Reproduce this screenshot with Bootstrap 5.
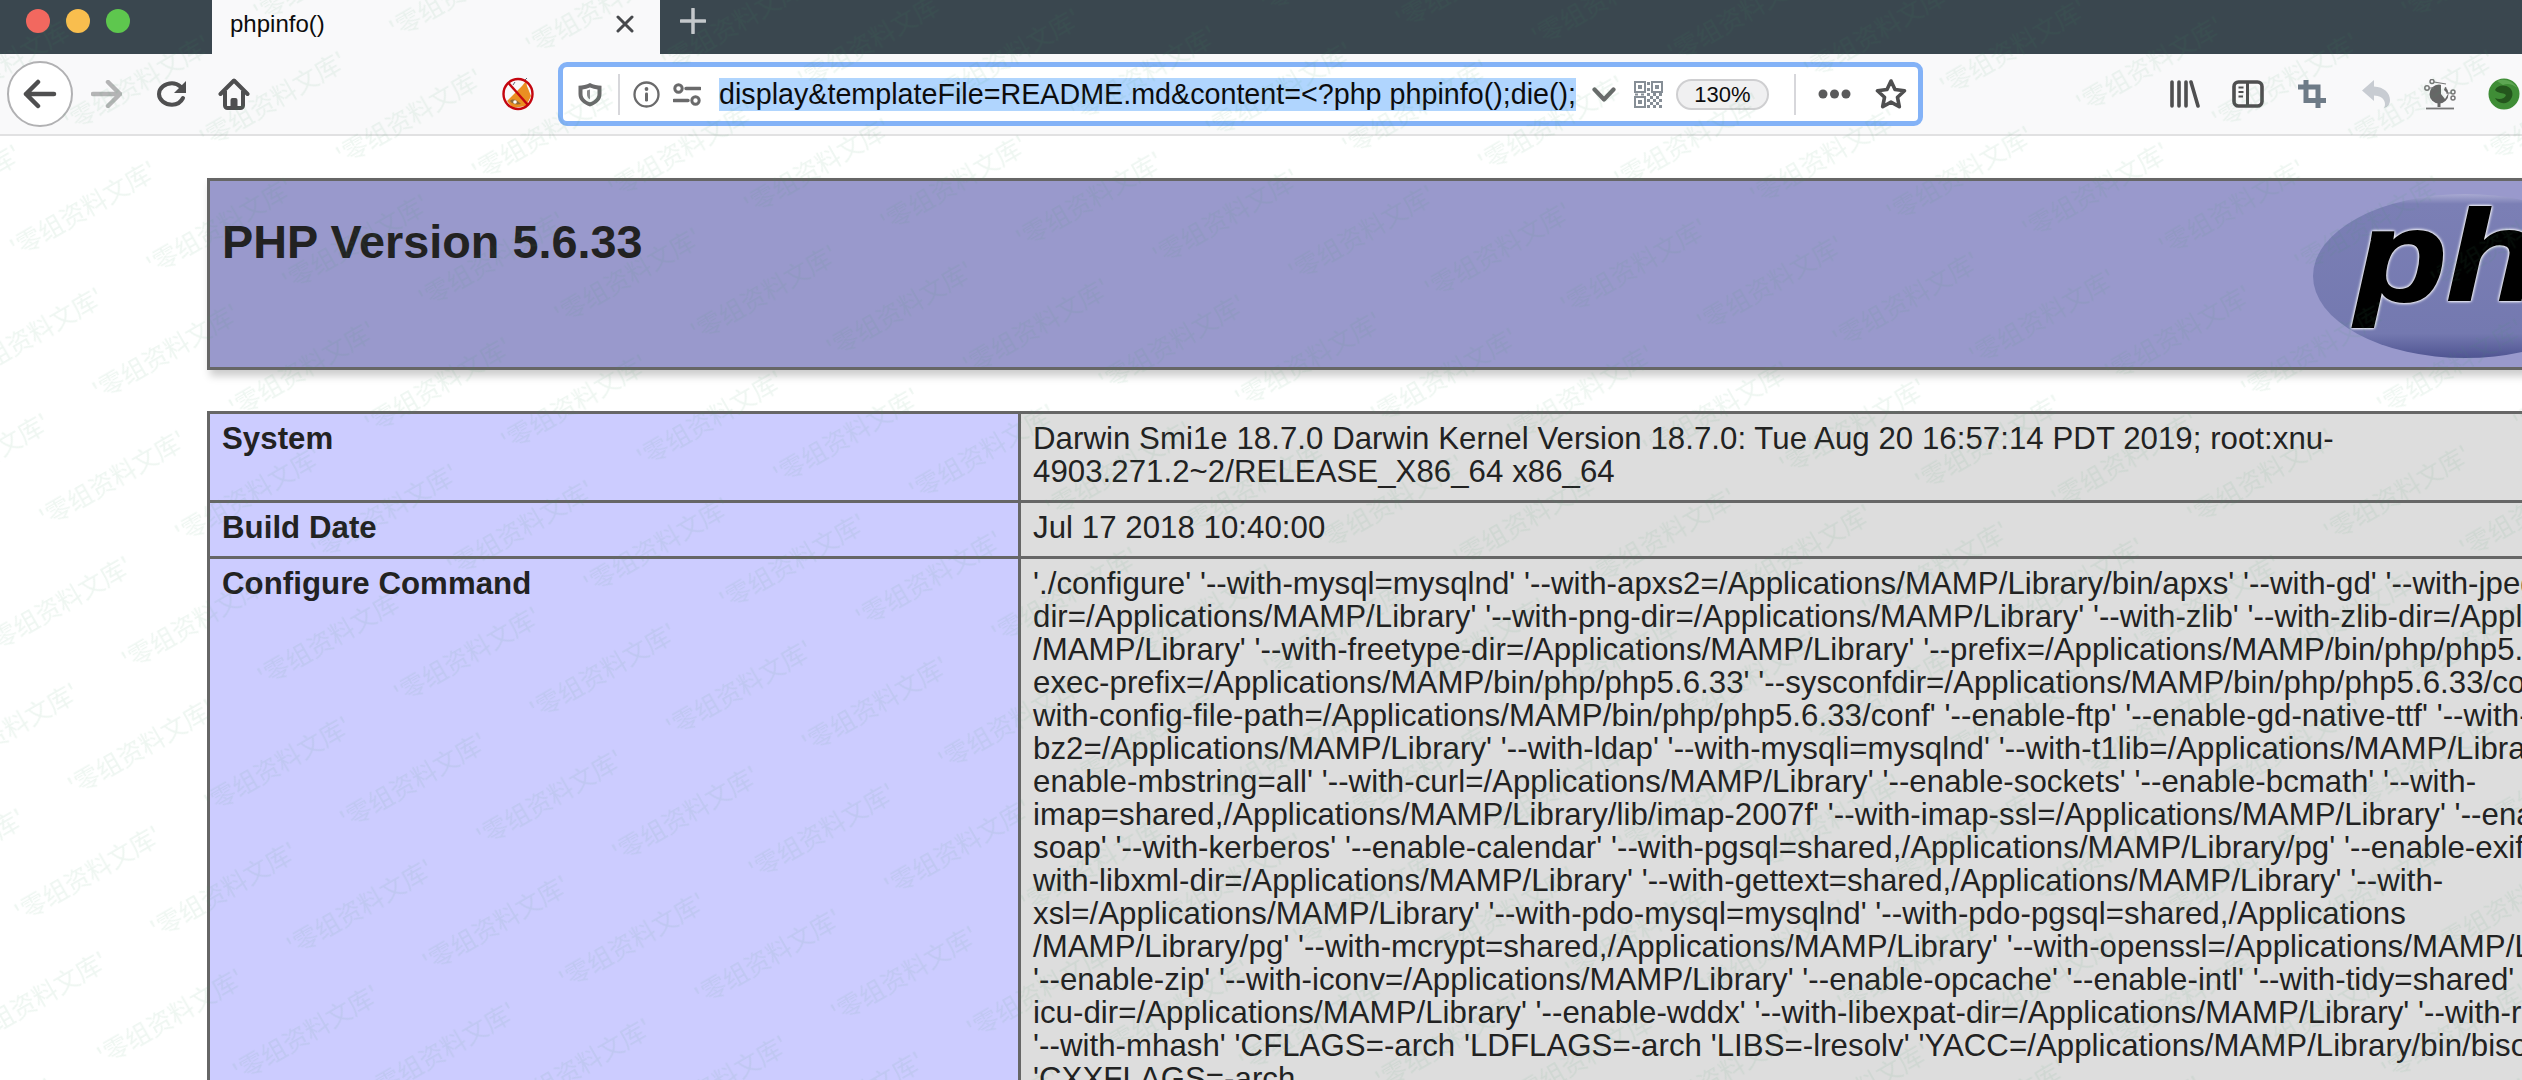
<!DOCTYPE html>
<html lang="en">
<head>
<meta charset="utf-8">
<title>phpinfo()</title>
<link href="https://cdn.jsdelivr.net/npm/bootstrap@5.3.0/dist/css/bootstrap.min.css" rel="stylesheet">
<style>
html,body{margin:0;background:#fff;overflow:hidden}
body{font-family:"Liberation Sans",Arial,"Noto Sans CJK SC",sans-serif;color:#222}
.page-frame{width:2522px;height:1080px}
svg{display:block;flex-shrink:0}
.tabbar{height:54px;background:#3a474f}
.light{width:24px;height:24px;border-radius:50%;margin-right:16px}
.l-red{background:#f2685f;margin-left:26px}
.l-yel{background:#f9be4e}
.l-grn{background:#5ec74e}
.tab-box{width:448px;height:54px;background:#f9f9fa;margin-left:66px;padding:0 26px 6px 18px;font-size:24px;color:#0c0c0d}
.ml-new{margin-left:20px}
.toolbar{height:82px;background:#f9f9fa;border-bottom:2px solid #e1e1e2}
.back-btn{width:66px;height:66px;border-radius:50%;background:#fff;border:2px solid #b1b1b3;margin-left:7px}
.m18{margin-left:18px}.m34{margin-left:34px}.m31{margin-left:31px}.m252{margin-left:252px}.m24{margin-left:24px}
.m247{margin-left:247px}.m32{margin-left:32px}.m36{margin-left:36px}
.addr{width:1365px;height:64px;background:#fff;border:5px solid #83b2f7;border-radius:9px}
.a14{margin-left:14px}.a15{margin-left:15px}.a13{margin-left:13px}.a18{margin-left:18px}.a16{margin-left:16px}.a25{margin-left:25px}.a22{margin-left:22px}.a24{margin-left:24px}
.vsep{width:2px;height:41px;background:#d7d7db;flex-shrink:0}
.url-sel{width:857px;height:33px;line-height:33px;font-size:28.7px;white-space:nowrap;background:#b0d5fe;color:#0c0c0d;flex-shrink:0;overflow:hidden}
.zoom-pill{width:93px;height:31px;border:2px solid #cfcfd1;background:#f0f0f1;font-size:22px;color:#0c0c0d;flex-shrink:0}
.content{padding:42px 0 0 207px;width:2700px}
.php-head{width:2428px;height:192px;background:#99c;border:3px solid #666;box-shadow:3px 6px 8px #ccc;padding:0 12px;margin-bottom:41px}
.php-head h1{font-size:46.8px;font-weight:700;line-height:54px;margin:0;padding-top:34px;color:#222}
.info-tbl{width:2428px;table-layout:fixed;border-collapse:collapse;font-size:31.2px;line-height:33px;color:#222;letter-spacing:.05px}
.info-tbl td{border:3px solid #666;padding:8px 12px 12px;vertical-align:top}
.td-key{width:811px;background:#ccf;font-weight:700}
.td-val{background:#ddd;white-space:nowrap;overflow:hidden}
.wm{position:absolute;left:0;top:0;pointer-events:none;z-index:5}
.wm text{font-family:"Noto Sans CJK SC",sans-serif;font-size:25px;fill:#3f9a62;fill-opacity:.085}
.logo-art{position:absolute;left:2280px;top:185px;z-index:2}
.logo-art text{font-family:"Liberation Sans",sans-serif;font-style:italic;font-weight:700;font-size:128px;stroke:#000;stroke-width:2px;fill:#000;filter:drop-shadow(0 0 1.5px #fff) drop-shadow(0 0 1px #fff)}
</style>
</head>
<body>
<div class="page-frame position-relative overflow-hidden">

<div class="tabbar d-flex align-items-start">
  <div class="d-flex align-items-center" style="height:42px">
    <span class="light l-red"></span><span class="light l-yel"></span><span class="light l-grn"></span>
  </div>
  <div class="tab-box d-flex align-items-center justify-content-between">
    <span>phpinfo()</span>
    <svg width="18" height="18" viewBox="0 0 18 18"><path d="M2 2L16 16M16 2L2 16" stroke="#47494c" stroke-width="3" stroke-linecap="round"/></svg>
  </div>
  <div class="d-flex align-items-center ml-new" style="height:42px">
    <svg width="26" height="26" viewBox="0 0 26 26"><path d="M13 1V25M1 13H25" stroke="#c4c8cb" stroke-width="3.5" stroke-linecap="round"/></svg>
  </div>
</div>

<div class="toolbar d-flex align-items-center">
  <div class="back-btn d-flex align-items-center justify-content-center flex-shrink-0">
    <svg width="34" height="30" viewBox="0 0 34 30"><path d="M3 15H31M15 3L3 15L15 27" fill="none" stroke="#4f4f50" stroke-width="4.5" stroke-linecap="round" stroke-linejoin="round"/></svg>
  </div>
  <svg class="m18" width="31" height="28" viewBox="0 0 31 28"><path d="M2 14H29M17 2L29 14L17 26" fill="none" stroke="#b4b4b5" stroke-width="4.5" stroke-linecap="round" stroke-linejoin="round"/></svg>
  <svg class="m34" width="31" height="26" viewBox="0 0 31 26"><path d="M25 6C22 3.500 19 2.300 16 2.300C9 2.300 3 7 3 13C3 19 9 23.700 16 23.700C21 23.700 25 21 27 17" fill="none" stroke="#4f4f50" stroke-width="4" stroke-linecap="round"/><path d="M30 0V12H18Z" fill="#4f4f50"/></svg>
  <svg class="m31" width="32" height="32" viewBox="0 0 32 32"><path d="M2.500 16L16 2.500L29.500 16" fill="none" stroke="#4f4f50" stroke-width="4" stroke-linecap="round" stroke-linejoin="round"/><path d="M7 13V27.500a2.500 2.500 0 0 0 2.500 2.500H22.500a2.500 2.500 0 0 0 2.500-2.500V13" fill="none" stroke="#4f4f50" stroke-width="4"/><path d="M12.500 30V22a2 2 0 0 1 2-2h3a2 2 0 0 1 2 2v8z" fill="#4f4f50"/></svg>
  <svg class="m252" width="32" height="34" viewBox="0 0 32 34"><path d="M5 24L20 9L24 4L25 9L29 19L24 29L11 31Z" fill="#ea8f22"/><path d="M8 24C11 21 15 23 19 27C14 28 10 27 8 24Z" fill="#8d6a3a"/><circle cx="13" cy="25" r="1.800" fill="#fff"/><path d="M11 8L13 5M22 4L25 1" stroke="#667" stroke-width="1"/><ellipse cx="16" cy="17" rx="14.500" ry="15" fill="none" stroke="#c4060f" stroke-width="2.400"/><path d="M6.500 6L26 28" stroke="#c4060f" stroke-width="2.400"/></svg>
  <div class="addr d-flex align-items-center flex-shrink-0 m24">
    <svg class="a14" width="26" height="25" viewBox="0 0 26 25"><path d="M13 1C9.500 2.800 5.500 3.600 1.500 3.800V12C1.500 18 6 22 13 24.500C20 22 24.500 18 24.500 12V3.800C20.500 3.600 16.500 2.800 13 1Z" fill="#6a6a6b"/><path d="M13 5.500C10.500 6.600 8 7.200 5.500 7.400V12C5.500 16 8.500 18.800 13 20.300C17.500 18.800 20.500 16 20.500 12V7.400C18 7.200 15.500 6.600 13 5.500Z" fill="#fff"/><path d="M13 7.500V17.500C10.800 16.500 10 14.500 10 12V8.500Z" fill="#8a8a8c"/></svg>
    <span class="vsep a15"></span>
    <svg class="a13" width="27" height="27" viewBox="0 0 27 27"><circle cx="13.500" cy="13.500" r="12" fill="none" stroke="#6a6a6b" stroke-width="2.300"/><circle cx="13.500" cy="8" r="1.900" fill="#6a6a6b"/><rect x="12" y="11.500" width="3" height="9" rx="1.200" fill="#6a6a6b"/></svg>
    <svg class="a13" width="28" height="23" viewBox="0 0 28 23"><circle cx="5.500" cy="5.500" r="3.700" fill="none" stroke="#6a6a6b" stroke-width="3"/><path d="M13 5.500H27M1 17.500H15" stroke="#6a6a6b" stroke-width="3.500" stroke-linecap="round"/><circle cx="22.500" cy="17.500" r="3.700" fill="none" stroke="#6a6a6b" stroke-width="3"/></svg>
    <span class="url-sel a18">display&amp;templateFile=README.md&amp;content=&lt;?php phpinfo();die();</span>
    <svg class="a16" width="24" height="15" viewBox="0 0 24 15"><path d="M2.500 2.500L12 12.500L21.500 2.500" fill="none" stroke="#6a6a6b" stroke-width="4.200" stroke-linecap="round" stroke-linejoin="round"/></svg>
    <svg class="a18" width="29" height="27" viewBox="0 0 29 27"><g fill="none" stroke="#868e96" stroke-width="2"><rect x="1" y="1" width="10" height="10"/><rect x="18" y="1" width="10" height="10"/><rect x="1" y="16" width="10" height="10"/></g><g fill="#868e96"><rect x="4" y="4" width="4" height="4"/><rect x="21" y="4" width="4" height="4"/><rect x="4" y="19" width="4" height="4"/><rect x="13" y="1" width="3" height="3"/><rect x="13" y="7" width="3" height="3"/><rect x="1" y="12.500" width="3" height="2"/><rect x="7" y="12.500" width="3" height="2"/><rect x="13" y="12" width="3" height="3"/><rect x="19" y="12" width="3" height="3"/><rect x="25" y="12" width="3" height="3"/><rect x="13" y="18" width="3" height="3"/><rect x="16" y="15" width="3" height="3"/><rect x="22" y="15" width="3" height="3"/><rect x="19" y="18" width="3" height="3"/><rect x="25" y="18" width="3" height="3"/><rect x="16" y="21" width="3" height="3"/><rect x="22" y="21" width="3" height="3"/><rect x="13" y="24" width="3" height="3"/><rect x="19" y="24" width="3" height="3"/><rect x="25" y="24" width="3" height="3"/></g></svg>
    <span class="zoom-pill a13 rounded-pill d-flex align-items-center justify-content-center">130%</span>
    <span class="vsep a25"></span>
    <svg class="a22" width="33" height="10" viewBox="0 0 33 10"><g fill="#5a5a5b"><circle cx="5" cy="5" r="4.500"/><circle cx="16.500" cy="5" r="4.500"/><circle cx="28" cy="5" r="4.500"/></g></svg>
    <svg class="a24" width="32" height="32" viewBox="0 0 32 32"><path d="M16 3L20 11.500L29.500 12.800L22.500 19.300L24.300 28.700L16 24.100L7.700 28.700L9.500 19.300L2.500 12.800L12 11.500Z" fill="none" stroke="#4f4f50" stroke-width="3.600" stroke-linejoin="round"/></svg>
  </div>
  <svg class="m247" width="30" height="28" viewBox="0 0 30 28"><path d="M2 2V26M9 2V26M16 2V26M21 2L28 26" fill="none" stroke="#4f4f50" stroke-width="3.600" stroke-linecap="round"/></svg>
  <svg class="m32" width="32" height="28" viewBox="0 0 32 28"><rect x="2" y="2" width="28" height="24" rx="4.500" fill="none" stroke="#4f4f50" stroke-width="3.600"/><path d="M15.500 2V26" stroke="#4f4f50" stroke-width="3"/><path d="M6.500 7.500H11.500M6.500 12H11.500M6.500 16.500H11" stroke="#4f4f50" stroke-width="2"/></svg>
  <svg class="m34" width="28" height="28" viewBox="0 0 28 28"><path d="M8 0V20.500H28M0 7H20V28" fill="none" stroke="#6e7b87" stroke-width="5"/></svg>
  <svg class="m36" width="28" height="28" viewBox="0 0 28 28"><path d="M0 10.500L12 0V6.500C22 7 28 13 28 20C28 24 26 27 22 28C24.500 24 23 16 12 15.500V21Z" fill="#c8ccd2"/></svg>
  <svg class="m34" width="32" height="31" viewBox="0 0 32 31"><circle cx="15" cy="15" r="9.500" fill="#666"/><path d="M17 6L22 5L20 11L24 15L21 20L17 15Z" fill="#f9f9fa"/><path d="M10 3L22 5M4 9H10M22 14H28" stroke="#777" stroke-width="1.200"/><g fill="#f9f9fa" stroke="#777" stroke-width="1.500"><circle cx="8" cy="2.500" r="2"/><circle cx="3" cy="9" r="2.200"/><circle cx="29" cy="13" r="2"/><circle cx="29" cy="19" r="2"/></g><path d="M15 24V28" stroke="#666" stroke-width="3"/><path d="M2 29.500H30" stroke="#777" stroke-width="1.800"/></svg>
  <svg class="m32" width="32" height="32" viewBox="0 0 32 32"><circle cx="16" cy="16" r="15.500" fill="#3f8d36"/><path d="M9 3C15 0 25 2 29 10C25 6 19 5 15 7Z" fill="#5da653"/><path d="M7 12C9 7 17 6 22 10C26 14 25 21 20 24C15 27 9 24 7 20C11 22 17 21 18 17C15 14 10 16 7 12Z" fill="#24561d"/></svg>
</div>

<div class="content">
  <div class="php-head"><h1>PHP Version 5.6.33</h1></div>
  <table class="info-tbl">
    <tbody>
      <tr><td class="td-key">System</td><td class="td-val">Darwin Smi1e 18.7.0 Darwin Kernel Version 18.7.0: Tue Aug 20 16:57:14 PDT 2019; root:xnu-<br>4903.271.2~2/RELEASE_X86_64 x86_64</td></tr>
      <tr><td class="td-key">Build Date</td><td class="td-val">Jul 17 2018 10:40:00</td></tr>
      <tr><td class="td-key">Configure Command</td><td class="td-val">'./configure' '--with-mysql=mysqlnd' '--with-apxs2=/Applications/MAMP/Library/bin/apxs' '--with-gd' '--with-jpeg-<br>
dir=/Applications/MAMP/Library' '--with-png-dir=/Applications/MAMP/Library' '--with-zlib' '--with-zlib-dir=/Applications<br>
/MAMP/Library' '--with-freetype-dir=/Applications/MAMP/Library' '--prefix=/Applications/MAMP/bin/php/php5.6.33' '--<br>
exec-prefix=/Applications/MAMP/bin/php/php5.6.33' '--sysconfdir=/Applications/MAMP/bin/php/php5.6.33/conf' '--<br>
with-config-file-path=/Applications/MAMP/bin/php/php5.6.33/conf' '--enable-ftp' '--enable-gd-native-ttf' '--with-<br>
bz2=/Applications/MAMP/Library' '--with-ldap' '--with-mysqli=mysqlnd' '--with-t1lib=/Applications/MAMP/Library' '--<br>
enable-mbstring=all' '--with-curl=/Applications/MAMP/Library' '--enable-sockets' '--enable-bcmath' '--with-<br>
imap=shared,/Applications/MAMP/Library/lib/imap-2007f' '--with-imap-ssl=/Applications/MAMP/Library' '--enable-<br>
soap' '--with-kerberos' '--enable-calendar' '--with-pgsql=shared,/Applications/MAMP/Library/pg' '--enable-exif' '--<br>
with-libxml-dir=/Applications/MAMP/Library' '--with-gettext=shared,/Applications/MAMP/Library' '--with-<br>
xsl=/Applications/MAMP/Library' '--with-pdo-mysql=mysqlnd' '--with-pdo-pgsql=shared,/Applications<br>
/MAMP/Library/pg' '--with-mcrypt=shared,/Applications/MAMP/Library' '--with-openssl=/Applications/MAMP/Library'<br>
'--enable-zip' '--with-iconv=/Applications/MAMP/Library' '--enable-opcache' '--enable-intl' '--with-tidy=shared' '--with-<br>
icu-dir=/Applications/MAMP/Library' '--enable-wddx' '--with-libexpat-dir=/Applications/MAMP/Library' '--with-readline<br>
'--with-mhash' 'CFLAGS=-arch 'LDFLAGS=-arch 'LIBS=-lresolv' 'YACC=/Applications/MAMP/Library/bin/bison'<br>
'CXXFLAGS=-arch</td></tr>
    </tbody>
  </table>
</div>

<svg class="logo-art" width="242" height="184" viewBox="2280 185 242 184">
  <defs><linearGradient id="ellg" x1="0" y1="0" x2="0" y2="1"><stop offset="0" stop-color="#a9aad2"/><stop offset=".06" stop-color="#7b7fb5"/><stop offset=".85" stop-color="#7479b0"/><stop offset="1" stop-color="#4f5492"/></linearGradient></defs>
  <ellipse cx="2465" cy="276" rx="152" ry="82" fill="url(#ellg)"/>
  <text transform="translate(2356 300) scale(1.16 1)">php</text>
</svg>

<svg class="wm" width="2522" height="1080" aria-hidden="true">
  <defs>
    <pattern id="wmp" patternUnits="userSpaceOnUse" width="219" height="165" patternTransform="translate(17 258) rotate(-30) translate(0 -40)">
      <text x="0" y="40">'零组资料文库'</text>
      <text x="109.500" y="122.500">'零组资料文库'</text>
      <text x="-109.500" y="122.500">'零组资料文库'</text>
    </pattern>
  </defs>
  <rect width="2522" height="1080" fill="url(#wmp)"/>
</svg>
</div>
</body>
</html>
